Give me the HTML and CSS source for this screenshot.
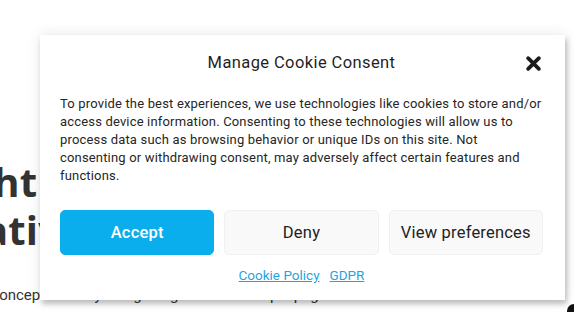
FILE: index.html
```html
<!DOCTYPE html>
<html lang="en">
<head>
<meta charset="utf-8">
<title>Manage Cookie Consent</title>
<link rel="stylesheet" href="styles.css">
</head>
<body>
  <main class="page">
    <h1 class="hero-title">Insight<br>Creative</h1>
    <p class="hero-text">Discover the concept of every design begins with a simple page</p>
  </main>

  <div class="cookie-banner" role="dialog" aria-label="Manage Cookie Consent">
    <div class="cookie-header">
      <div class="cookie-title">Manage Cookie Consent</div>
      <button class="cookie-close" aria-label="Close">
        <svg viewBox="0 0 14 14" width="15" height="15" aria-hidden="true">
          <path d="M2 2 L12 12 M12 2 L2 12" stroke="#1b1b1b" stroke-width="3.4" stroke-linecap="round" fill="none"/>
        </svg>
      </button>
    </div>
    <p class="cookie-message">To provide the best experiences, we use technologies like cookies to store and/or access device information. Consenting to these technologies will allow us to process data such as browsing behavior or unique IDs on this site. Not consenting or withdrawing consent, may adversely affect certain features and functions.</p>
    <div class="cookie-buttons">
      <button class="cookie-btn cookie-btn-accept">Accept</button>
      <button class="cookie-btn">Deny</button>
      <button class="cookie-btn">View preferences</button>
    </div>
    <div class="cookie-links">
      <a href="#">Cookie Policy</a>
      <a href="#">GDPR</a>
    </div>
  </div>

  <div class="corner-widget"></div>
</body>
</html>
```

FILE: styles.css
```css
html, body {
  margin: 0;
  padding: 0;
  background: #ffffff;
  width: 574px;
  height: 312px;
  overflow: hidden;
}

body {
  font-family: Roboto, "Open Sans", "Liberation Sans", sans-serif;
  color: #222222;
  position: relative;
}

.page {
  padding-top: 158px;
  margin-left: -84px;
  white-space: nowrap;
}

.hero-title {
  margin: 0;
  font-family: "Open Sans", Roboto, sans-serif;
  font-size: 40px;
  line-height: 48px;
  font-weight: 700;
  color: #333333;
  letter-spacing: 0.2px;
  text-indent: -18px;
}

.hero-text {
  margin: 31px 0 0 0;
  font-size: 15px;
  line-height: 20px;
  color: #333333;
  text-indent: -11px;
}

.cookie-banner {
  position: absolute;
  left: 40px;
  top: 35px;
  width: 525px;
  height: 265px;
  box-sizing: border-box;
  padding: 16px 22px 0 20px;
  background: #ffffff;
  box-shadow: 0 0 14px rgba(0, 0, 0, 0.10), 2px 4px 5px rgba(0, 0, 0, 0.22);
  display: flex;
  flex-direction: column;
}

.cookie-header {
  position: relative;
  display: flex;
  justify-content: center;
  align-items: center;
  height: 24px;
}

.cookie-title {
  font-size: 16.5px;
  line-height: 24px;
  font-weight: 400;
  letter-spacing: 0.4px;
  color: #1f1f1f;
}

.cookie-close {
  position: absolute;
  right: 2px;
  top: 4px;
  width: 16px;
  height: 16px;
  padding: 0;
  border: 0;
  background: none;
  display: flex;
  align-items: center;
  justify-content: center;
}

.cookie-message {
  margin: 20px 0 0 0;
  font-size: 13px;
  line-height: 18px;
  letter-spacing: 0.17px;
  color: #262626;
}

.cookie-buttons {
  margin-top: 25px;
  display: grid;
  grid-template-columns: repeat(3, 1fr);
  gap: 10px;
}

.cookie-btn {
  height: 45px;
  border: 1px solid #f0f0f0;
  border-radius: 5px;
  background: #f9f9f9;
  font-family: inherit;
  font-size: 16.5px;
  font-weight: 400;
  letter-spacing: 0.2px;
  color: #222222;
  padding: 0;
}

.cookie-btn-accept {
  background: #0aaeec;
  border-color: #0aaeec;
  color: #ffffff;
  font-weight: 500;
}

.cookie-links {
  margin-top: 11px;
  display: flex;
  justify-content: center;
  gap: 10px;
  font-size: 13.5px;
  line-height: 18px;
}

.cookie-links a {
  color: #1ea5e6;
  text-decoration: underline;
}

.corner-widget {
  position: absolute;
  left: 567px;
  top: 304px;
  width: 20px;
  height: 20px;
  background: #111111;
  border-top-left-radius: 7px;
}
```
